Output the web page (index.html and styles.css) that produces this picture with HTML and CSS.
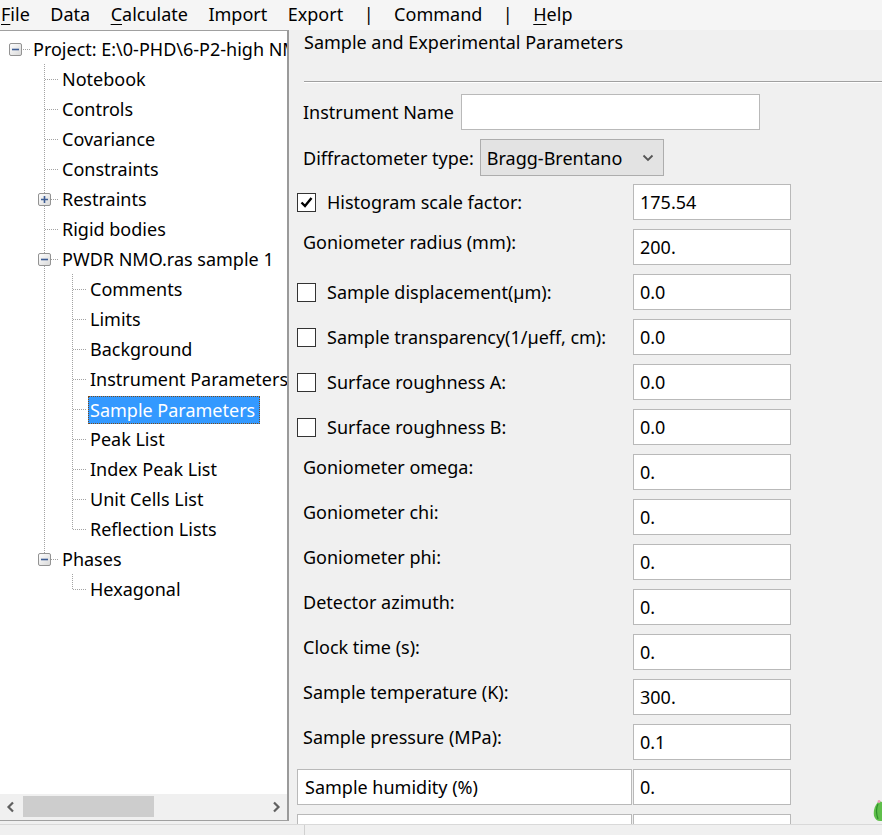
FILE: index.html
```html
<!DOCTYPE html>
<html>
<head>
<meta charset="utf-8">
<title>GSAS-II</title>
<link rel="stylesheet" href="styles.css">
</head>
<body>
<div class="app">
  <div class="menubar">
    <span class="mi"><u>F</u>ile</span>
    <span class="mi">Data</span>
    <span class="mi"><u>C</u>alculate</span>
    <span class="mi">Import</span>
    <span class="mi">Export</span>
    <span class="mi">|</span>
    <span class="mi">Command</span>
    <span class="mi">|</span>
    <span class="mi"><u>H</u>elp</span>
  </div>

  <div class="main">
    <div class="tree">
      <div class="tree-body">
        <div class="row">
          <span class="ind first h"><svg class="exp" width="13" height="13" viewBox="0 0 13 13"><defs><linearGradient id="g1" x1="0" y1="0" x2="1" y2="1"><stop offset="0" stop-color="#ffffff"/><stop offset="1" stop-color="#d8d8d8"/></linearGradient></defs><rect x="0.5" y="0.5" width="12" height="12" rx="1.5" fill="url(#g1)" stroke="#939393"/><path d="M3 6.5h7" stroke="#3d5d94" stroke-width="1.6"/></svg></span>
          <span class="lbl">Project: E:\0-PHD\6-P2-high NM</span>
        </div>
        <div class="row"><span class="ind first"></span><span class="ind t"></span><span class="lbl">Notebook</span></div>
        <div class="row"><span class="ind first"></span><span class="ind t"></span><span class="lbl">Controls</span></div>
        <div class="row"><span class="ind first"></span><span class="ind t"></span><span class="lbl">Covariance</span></div>
        <div class="row"><span class="ind first"></span><span class="ind t"></span><span class="lbl">Constraints</span></div>
        <div class="row"><span class="ind first"></span><span class="ind t"><svg class="exp" width="13" height="13" viewBox="0 0 13 13"><rect x="0.5" y="0.5" width="12" height="12" rx="1.5" fill="url(#g1)" stroke="#939393"/><path d="M3 6.5h7M6.5 3v7" stroke="#3d5d94" stroke-width="1.6"/></svg></span><span class="lbl">Restraints</span></div>
        <div class="row"><span class="ind first"></span><span class="ind t"></span><span class="lbl">Rigid bodies</span></div>
        <div class="row"><span class="ind first"></span><span class="ind t"><svg class="exp" width="13" height="13" viewBox="0 0 13 13"><rect x="0.5" y="0.5" width="12" height="12" rx="1.5" fill="url(#g1)" stroke="#939393"/><path d="M3 6.5h7" stroke="#3d5d94" stroke-width="1.6"/></svg></span><span class="lbl">PWDR NMO.ras sample 1</span></div>
        <div class="row"><span class="ind first"></span><span class="ind v"></span><span class="ind t"></span><span class="lbl">Comments</span></div>
        <div class="row"><span class="ind first"></span><span class="ind v"></span><span class="ind t"></span><span class="lbl">Limits</span></div>
        <div class="row"><span class="ind first"></span><span class="ind v"></span><span class="ind t"></span><span class="lbl">Background</span></div>
        <div class="row"><span class="ind first"></span><span class="ind v"></span><span class="ind t"></span><span class="lbl">Instrument Parameters</span></div>
        <div class="row"><span class="ind first"></span><span class="ind v"></span><span class="ind t"></span><span class="lbl sel">Sample Parameters</span></div>
        <div class="row"><span class="ind first"></span><span class="ind v"></span><span class="ind t"></span><span class="lbl">Peak List</span></div>
        <div class="row"><span class="ind first"></span><span class="ind v"></span><span class="ind t"></span><span class="lbl">Index Peak List</span></div>
        <div class="row"><span class="ind first"></span><span class="ind v"></span><span class="ind t"></span><span class="lbl">Unit Cells List</span></div>
        <div class="row"><span class="ind first"></span><span class="ind v"></span><span class="ind c"></span><span class="lbl">Reflection Lists</span></div>
        <div class="row"><span class="ind first"></span><span class="ind c"><svg class="exp" width="13" height="13" viewBox="0 0 13 13"><rect x="0.5" y="0.5" width="12" height="12" rx="1.5" fill="url(#g1)" stroke="#939393"/><path d="M3 6.5h7" stroke="#3d5d94" stroke-width="1.6"/></svg></span><span class="lbl">Phases</span></div>
        <div class="row"><span class="ind first"></span><span class="ind"></span><span class="ind c"></span><span class="lbl">Hexagonal</span></div>
      </div>
      <div class="hscroll">
        <span class="sarrow"><svg width="10" height="12" viewBox="0 0 10 12"><path d="M7 1.5 2.5 6 7 10.5" fill="none" stroke="#606060" stroke-width="2.2"/></svg></span>
        <div class="track"><div class="thumb"></div></div>
        <span class="sarrow"><svg width="10" height="12" viewBox="0 0 10 12"><path d="M3 1.5 7.5 6 3 10.5" fill="none" stroke="#606060" stroke-width="2.2"/></svg></span>
      </div>
    </div>

    <div class="pane">
      <div class="title">Sample and Experimental Parameters</div>
      <div class="sep"></div>

      <div class="line">
        <span class="plabel name-label">Instrument Name</span>
        <span class="field wide"></span>
      </div>
      <div class="line">
        <span class="plabel">Diffractometer type:</span>
        <span class="select">Bragg-Brentano<svg class="chev" width="12" height="8" viewBox="0 0 12 8"><path d="M1.5 1.5 6 6l4.5-4.5" fill="none" stroke="#555" stroke-width="1.8"/></svg></span>
      </div>

      <div class="grid">
        <label class="cell chk"><span class="box"><svg width="17" height="17" viewBox="0 0 17 17"><path d="M3.5 8.5 7 12l6.5-8" fill="none" stroke="#000" stroke-width="2.4"/></svg></span>Histogram scale factor:</label>
        <span class="field">175.54</span>

        <span class="cell top">Goniometer radius (mm):</span>
        <span class="field">200.</span>

        <label class="cell chk"><span class="box"></span>Sample displacement(µm):</label>
        <span class="field">0.0</span>

        <label class="cell chk"><span class="box"></span>Sample transparency(1/µeff, cm):</label>
        <span class="field">0.0</span>

        <label class="cell chk"><span class="box"></span>Surface roughness A:</label>
        <span class="field">0.0</span>

        <label class="cell chk"><span class="box"></span>Surface roughness B:</label>
        <span class="field">0.0</span>

        <span class="cell top">Goniometer omega:</span>
        <span class="field">0.</span>

        <span class="cell top">Goniometer chi:</span>
        <span class="field">0.</span>

        <span class="cell top">Goniometer phi:</span>
        <span class="field">0.</span>

        <span class="cell top">Detector azimuth:</span>
        <span class="field">0.</span>

        <span class="cell top">Clock time (s):</span>
        <span class="field">0.</span>

        <span class="cell top">Sample temperature (K):</span>
        <span class="field">300.</span>

        <span class="cell top">Sample pressure (MPa):</span>
        <span class="field">0.1</span>

        <span class="cell boxed">Sample humidity (%)</span>
        <span class="field">0.</span>

        <span class="cell boxed last"></span>
        <span class="field last"></span>
      </div>
    </div>
  </div>

  <div class="status">
    <div class="status-cell"></div>
    <div class="status-rest"></div>
  </div>

  <svg class="leaf" width="10" height="22" viewBox="0 0 10 22"><path d="M7 1C3 5 1 10 2 16c1 3 3 5 6 5L10 21V2Z" fill="#5fbf4a"/><path d="M6 4c-2 4-2 9 0 15" stroke="#2f8f2a" stroke-width="1.2" fill="none"/><circle cx="7" cy="1.5" r="1.4" fill="#f0a0c0"/></svg>
</div>
</body>
</html>
```

FILE: styles.css
```css
* { box-sizing: border-box; }

html, body {
  margin: 0;
  padding: 0;
  width: 882px;
  height: 835px;
  overflow: hidden;
}

body {
  font-family: "Noto Sans", "Open Sans", "Liberation Sans", sans-serif;
  font-size: 18px;
  color: #000;
  background: #f0f0f0;
}

.app {
  position: relative;
  height: 835px;
  display: flex;
  flex-direction: column;
}

/* ---------- menu bar ---------- */
.menubar {
  height: 30px;
  flex: none;
  display: flex;
  align-items: center;
  gap: 20.5px;
  padding: 0 0 2px 1px;
  background: #f5f5f5;
  line-height: 28px;
  white-space: nowrap;
}
.mi u { text-decoration-thickness: 1px; text-underline-offset: 3px; }

/* ---------- main area ---------- */
.main {
  flex: none;
  height: 794px;
  display: flex;
  overflow: hidden;
}

/* ---------- tree ---------- */
.tree {
  flex: none;
  width: 289px;
  height: 791px;
  display: flex;
  flex-direction: column;
  background: #fff;
  border-top: 1px solid #a0a0a0;
  border-right: 2px solid #9a9a9a;
  border-bottom: 1px solid #a0a0a0;
  overflow: hidden;
}

.tree-body {
  flex: 1;
  padding-top: 3px;
  overflow: hidden;
}

.row {
  height: 30px;
  display: flex;
  align-items: center;
  white-space: nowrap;
}

.ind {
  flex: none;
  width: 28px;
  height: 30px;
  display: flex;
  align-items: flex-start;
  background-repeat: no-repeat;
}
.ind.first { width: 30px; }

.ind .exp { margin: 9px 0 0 8px; display: block; }
.ind.first .exp { margin-left: 9px; }

/* dotted connector lines */
.ind.v {
  background-image: repeating-linear-gradient(to bottom, #a3a3a3 0 1px, transparent 1px 2px);
  background-size: 1px 100%;
  background-position: 14px 0;
}
.ind.t {
  background-image:
    repeating-linear-gradient(to bottom, #a3a3a3 0 1px, transparent 1px 2px),
    repeating-linear-gradient(to right, #a3a3a3 0 1px, transparent 1px 2px);
  background-size: 1px 100%, 14px 1px;
  background-position: 14px 0, 15px 15px;
}
.ind.c {
  background-image:
    repeating-linear-gradient(to bottom, #a3a3a3 0 1px, transparent 1px 2px),
    repeating-linear-gradient(to right, #a3a3a3 0 1px, transparent 1px 2px);
  background-size: 1px 15px, 14px 1px;
  background-position: 14px 0, 15px 15px;
}
.ind.h {
  background-image: repeating-linear-gradient(to right, #a3a3a3 0 1px, transparent 1px 2px);
  background-size: 10px 1px;
  background-position: 21px 15px;
}

.lbl {
  margin-left: 2px;
  padding: 0 1px;
  height: 28px;
  line-height: 26px;
  border: 1px dotted transparent;
}
.row:first-child .lbl { margin-left: 1px; }
.lbl.sel {
  background: #3399ff;
  color: #fff;
  border-color: #7a4a1a;
  margin-top: 2px;
  padding-right: 4px;
}

/* horizontal scrollbar */
.hscroll {
  flex: none;
  height: 26px;
  display: flex;
  align-items: center;
  background: #f0f0f0;
  padding: 0 0 1px 0;
}
.sarrow {
  flex: none;
  width: 22px;
  display: flex;
  justify-content: center;
}
.sarrow svg { display: block; }
.track {
  flex: 1;
  height: 21px;
  display: flex;
}
.thumb {
  width: 131px;
  height: 21px;
  margin-left: 1px;
  background: #cdcdcd;
}

/* ---------- parameter pane ---------- */
.pane {
  flex: 1;
  min-width: 0;
  padding-left: 8px;
  background: #f0f0f0;
  overflow: hidden;
}

.title {
  margin-left: 7px;
  line-height: 24px;
  white-space: nowrap;
}

.sep {
  margin: 27px 0 0 7px;
  height: 2px;
  border-top: 1px solid #a0a0a0;
  border-bottom: 1px solid #ffffff;
}

.line {
  display: flex;
  align-items: center;
  gap: 6px;
  margin-top: 11px;
  white-space: nowrap;
}
.line + .line { margin-top: 9px; }

.plabel { margin-left: 6px; }
.name-label { width: 152px; }

.field {
  display: flex;
  align-items: center;
  height: 36px;
  padding: 0 6px;
  background: #fff;
  border: 1px solid #b9b9b9;
  white-space: nowrap;
}
.field.wide { width: 299px; }

.select {
  display: flex;
  align-items: center;
  width: 184px;
  height: 37px;
  padding: 0 0 0 6px;
  background: #e3e3e3;
  border: 1px solid #adadad;
}
.chev { margin-left: auto; margin-right: 9px; }

.grid {
  display: grid;
  grid-template-columns: 336px 158px;
  grid-auto-rows: 36px;
  row-gap: 9px;
  margin-top: 8px;
}

.cell {
  white-space: nowrap;
  display: flex;
  align-items: center;
}
.cell.top {
  align-items: flex-start;
  padding-left: 6px;
  line-height: 26px;
}
.cell.chk { gap: 11px; }
.cell.boxed {
  width: 335px;
  padding-left: 7px;
  background: #fff;
  border: 1px solid #b9b9b9;
}

.box {
  flex: none;
  width: 19px;
  height: 19px;
  display: flex;
  align-items: center;
  justify-content: center;
  background: #fff;
  border: 1px solid #333;
}
.box svg { display: block; }

/* ---------- status bar ---------- */
.status {
  flex: none;
  height: 11px;
  display: flex;
  border-top: 1px solid #d9d9d9;
  background: #f0f0f0;
}
.status-cell {
  width: 305px;
  border-right: 1px solid #d0d0d0;
}
.status-rest { flex: 1; }

.leaf {
  position: absolute;
  right: 0;
  bottom: 13px;
}
```
